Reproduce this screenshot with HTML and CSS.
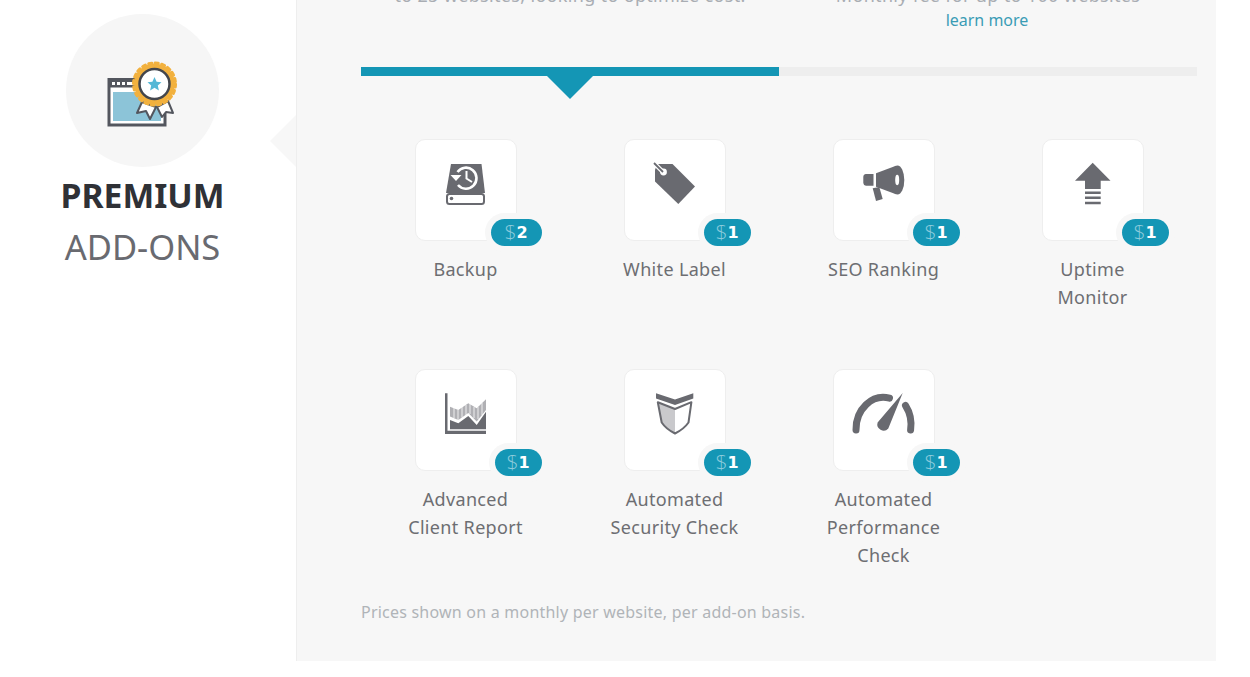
FILE: index.html
```html
<!DOCTYPE html>
<html lang="en">
<head>
<meta charset="utf-8">
<title>Premium Add-ons</title>
<link rel="stylesheet" href="styles.css">
</head>
<body>
<div class="page">
  <aside class="side">
    <div class="medal">
      <svg class="medal-svg" viewBox="0 0 153 153" aria-hidden="true">
        <rect x="43" y="65.500" width="56" height="45.500" fill="#fff" stroke="#53565e" stroke-width="3"/>
        <rect x="43" y="65.500" width="56" height="8" fill="#53565e"/>
        <rect x="46" y="68" width="3" height="3" fill="#fff"/><rect x="51" y="68" width="3" height="3" fill="#fff"/><rect x="56" y="68" width="3" height="3" fill="#fff"/><rect x="61" y="68" width="22" height="3" fill="#fff"/>
        <rect x="47" y="78" width="48" height="29" fill="#8cc4d8"/>
        <path d="M71 99 76 88 90 93 84 105 80 97Z" fill="#fff" stroke="#53565e" stroke-width="2" stroke-linejoin="round"/>
        <path d="M91 93 102 87 107 99 100 98 96 103Z" fill="#fff" stroke="#53565e" stroke-width="2" stroke-linejoin="round"/>
        <circle cx="88.500" cy="70" r="20.500" fill="#f2b13e"/>
        <circle cx="88.500" cy="70" r="21" fill="none" stroke="#f2b13e" stroke-width="3" stroke-dasharray="3.200 3.400" stroke-linecap="round"/>
        <circle cx="88.500" cy="70" r="15" fill="#fff" stroke="#43464d" stroke-width="2.500"/>
        <path d="M88.500 63 90.600 67.800 95.500 68.200 91.800 71.500 92.900 76.500 88.500 73.800 84.100 76.500 85.200 71.500 81.500 68.200 86.400 67.800Z" fill="#55b8d6"/>
      </svg>
    </div>
    <h2 class="title"><strong>PREMIUM</strong><span>ADD-ONS</span></h2>
    <div class="notch"></div>
  </aside>
  <main class="panel">
    <div class="plans">
      <p class="plan">to 25 websites, looking to optimize cost.</p>
      <p class="plan">Monthly fee for up to 100 websites<br><a class="more" href="#">learn more</a></p>
    </div>
    <div class="bar"><div class="bar-fill"></div><div class="bar-arrow"></div></div>
    <div class="grid">
      <div class="addon">
        <div class="card">
          <svg class="ico" viewBox="1 1 100 100" aria-hidden="true">
            <path d="M36 25H66.500L70 54H31Z" fill="#696a70"/>
            <rect x="32" y="55" width="37" height="10" rx="2.500" fill="#fff" stroke="#696a70" stroke-width="2"/>
            <circle cx="36.500" cy="59.500" r="1.800" fill="#696a70"/>
            <path d="M42.500 33A10.500 10.500 0 1 1 43 46" fill="none" stroke="#fff" stroke-width="2.600"/>
            <path d="M35.500 36H46.500L41 42Z" fill="#fff"/>
            <path d="M51.500 32V39.500L57 43" fill="none" stroke="#fff" stroke-width="2"/>
          </svg>
          <span class="price price-wide"><i>$</i><b>2</b></span>
        </div>
        <p class="name">Backup</p>
      </div>
      <div class="addon">
        <div class="card">
          <svg class="ico" viewBox="1 1 100 100" aria-hidden="true">
            <path d="M33 25H48.500L71 47.500 54.300 65 31 42.500V31Z" fill="#696a70"/>
            <circle cx="39.500" cy="33" r="3.400" fill="#fff"/>
            <path d="M30 24 39 33" stroke="#fff" stroke-width="4.500"/>
            <path d="M30 24 39 33" stroke="#696a70" stroke-width="1.800"/>
          </svg>
          <span class="price"><i>$</i><b>1</b></span>
        </div>
        <p class="name">White Label</p>
      </div>
      <div class="addon">
        <div class="card">
          <svg class="ico" viewBox="1 1 100 100" aria-hidden="true">
            <path d="M33 35H40.500V46.700H33A3 3 0 0 1 30.300 44V38A3 3 0 0 1 33 35Z" fill="#696a70"/>
            <path d="M43 34.300 63 26.700V55.300L43 47.700Z" fill="#696a70"/>
            <ellipse cx="64.500" cy="41" rx="6.800" ry="14.500" fill="#696a70"/>
            <ellipse cx="64.200" cy="41" rx="2" ry="5.200" fill="#fff"/>
            <path d="M39.700 49.300 46.300 48 49.700 60 43 62Z" fill="#696a70"/>
          </svg>
          <span class="price"><i>$</i><b>1</b></span>
        </div>
        <p class="name">SEO Ranking</p>
      </div>
      <div class="addon">
        <div class="card">
          <svg class="ico" viewBox="1 1 100 100" aria-hidden="true">
            <path d="M50.700 23.700 68.500 41.700H58.700V50H43V41.700H33Z" fill="#696a70"/>
            <path d="M43 52.500H58.700V55H43ZM43 57.500H58.700V60H43ZM43 62.700H58.700V65.200H43Z" fill="#696a70"/>
          </svg>
          <span class="price"><i>$</i><b>1</b></span>
        </div>
        <p class="name">Uptime<br>Monitor</p>
      </div>
      <div class="addon">
        <div class="card">
          <svg class="ico" viewBox="1 1 100 100" aria-hidden="true">
            <path d="M35 37.700 43.300 41 53.300 34.300 61.700 39.300 71 30.300V41L61.700 52.500 53.300 44 43.300 51 35 47.500Z" fill="#b0b0b4"/>
            <path d="M39 39V49M43 41V51M47 38V48.500M51 36V46M55 35V45M59 38V49M63 38V50M67 34V46" stroke="#fff" stroke-width=".8"/>
            <path d="M35 51 43.300 54.300 53.300 47 61.700 56 71 42.700V60.300H35Z" fill="#696a70"/>
            <path d="M30 24.300H32.500V61.700H71V65H30Z" fill="#696a70"/>
          </svg>
          <span class="price"><i>$</i><b>1</b></span>
        </div>
        <p class="name">Advanced<br>Client Report</p>
      </div>
      <div class="addon">
        <div class="card">
          <svg class="ico" viewBox="1 1 100 100" aria-hidden="true">
            <path d="M32 24.300 51 30.500 69.300 24.300V29.500L51 36 32 29.500Z" fill="#696a70"/>
            <path d="M34 33.500 51 40V64.500L43 59.500 38 54Z" fill="#c9c9cc"/>
            <path d="M33.800 33.200 51 40 67.400 33.200 64.500 53.500 Q60 60 51 64.500 42 60 37.700 53.500Z" fill="none" stroke="#696a70" stroke-width="2" stroke-linejoin="round"/>
          </svg>
          <span class="price"><i>$</i><b>1</b></span>
        </div>
        <p class="name">Automated<br>Security Check</p>
      </div>
      <div class="addon">
        <div class="card">
          <svg class="ico" viewBox="1 1 100 100" aria-hidden="true">
            <path d="M23 61A27.500 32 0 0 1 56.500 29.200" fill="none" stroke="#696a70" stroke-width="7" stroke-linecap="round"/>
            <path d="M72.500 36.500A27.500 32 0 0 1 77.600 61" fill="none" stroke="#696a70" stroke-width="7" stroke-linecap="round"/>
            <path d="M69.700 24 55.300 59.500A6.300 6.300 0 0 1 44.600 53.500Z" fill="#696a70"/>
          </svg>
          <span class="price"><i>$</i><b>1</b></span>
        </div>
        <p class="name">Automated<br>Performance<br>Check</p>
      </div>
    </div>
    <p class="note">Prices shown on a monthly per website, per add-on basis.</p>
  </main>
</div>
</body>
</html>
```
FILE: styles.css
```css
html, body {
  margin: 0;
  padding: 0;
  background: #fff;
  overflow: hidden;
}
.page {
  display: flex;
  width: 1250px;
  height: 677px;
  font-family: "Noto Sans", "Open Sans", sans-serif;
}
.side {
  position: relative;
  width: 296px;
  flex: none;
  display: flex;
  flex-direction: column;
  align-items: center;
  padding: 14px 11px 0 0;
  box-sizing: border-box;
}
.medal {
  width: 153px;
  height: 153px;
  border-radius: 50%;
  background: #f6f6f6;
}
.medal-svg {
  display: block;
  width: 153px;
  height: 153px;
}
.title {
  margin: 2px 0 0;
  display: flex;
  flex-direction: column;
  align-items: center;
  font-size: 33.700px;
  line-height: 52px;
  font-weight: 400;
  color: #696a70;
}
.title strong {
  color: #2f3136;
  font-weight: 700;
}
.title span {
  font-size: 34.500px;
}
.notch {
  position: absolute;
  right: 0;
  top: 115px;
  width: 0;
  height: 0;
  border-style: solid;
  border-width: 26px 26px 26px 0;
  border-color: transparent #f7f7f7 transparent transparent;
}
.panel {
  width: 920px;
  height: 661px;
  flex: none;
  box-sizing: border-box;
  background: #f7f7f7;
  border-left: 1px solid #eeeeee;
  padding: 0 19px 0 64px;
  overflow: hidden;
}
.plans {
  display: grid;
  grid-template-columns: 1fr 1fr;
  margin-top: -17px;
  height: 49px;
}
.plan {
  margin: 0;
  text-align: center;
  font-size: 18px;
  letter-spacing: .33px;
  line-height: 24px;
  color: #a9adb3;
}
.more {
  margin-right: 2px;
  font-size: 16px;
  letter-spacing: 0;
  color: #3a9cb5;
  text-decoration: none;
}
.bar {
  position: relative;
  margin-top: 35px;
  height: 9px;
  background: #eeeeee;
}
.bar-fill {
  width: 50%;
  height: 100%;
  background: #1496b5;
}
.bar-arrow {
  position: absolute;
  left: 186px;
  top: 9px;
  width: 0;
  height: 0;
  border-style: solid;
  border-width: 23px 23.500px 0;
  border-color: #1496b5 transparent transparent;
}
.grid {
  display: grid;
  grid-template-columns: repeat(4, 209px);
  grid-auto-rows: 230px;
  margin-top: 63px;
}
.addon {
  display: flex;
  flex-direction: column;
  align-items: center;
}
.card {
  position: relative;
  width: 102px;
  height: 102px;
  box-sizing: border-box;
  background: #fff;
  border: 1px solid #eeeeee;
  border-radius: 10px;
}
.ico {
  display: block;
  width: 100px;
  height: 100px;
}
.price {
  position: absolute;
  right: -26px;
  bottom: -6px;
  width: 47px;
  height: 27px;
  display: flex;
  align-items: center;
  justify-content: center;
  border-radius: 14px;
  background: #1496b5;
  box-shadow: 0 0 0 6px #f7f7f7;
}
.price-wide {
  width: 51px;
}
.price i {
  font-family: "Open Sans", sans-serif;
  font-style: normal;
  font-weight: 300;
  font-size: 21px;
  line-height: 27px;
  color: #8ccbdc;
}
.price b {
  font-family: "DejaVu Sans", sans-serif;
  font-weight: 700;
  font-size: 16px;
  line-height: 27px;
  color: #fff;
}
.name {
  margin: 14px 0 0;
  text-align: center;
  font-size: 18px;
  letter-spacing: .33px;
  line-height: 28px;
  color: #6d6e72;
}
.note {
  margin: 1px 0 0;
  font-size: 16px;
  letter-spacing: .22px;
  line-height: 24px;
  color: #b0b4b8;
}
```
